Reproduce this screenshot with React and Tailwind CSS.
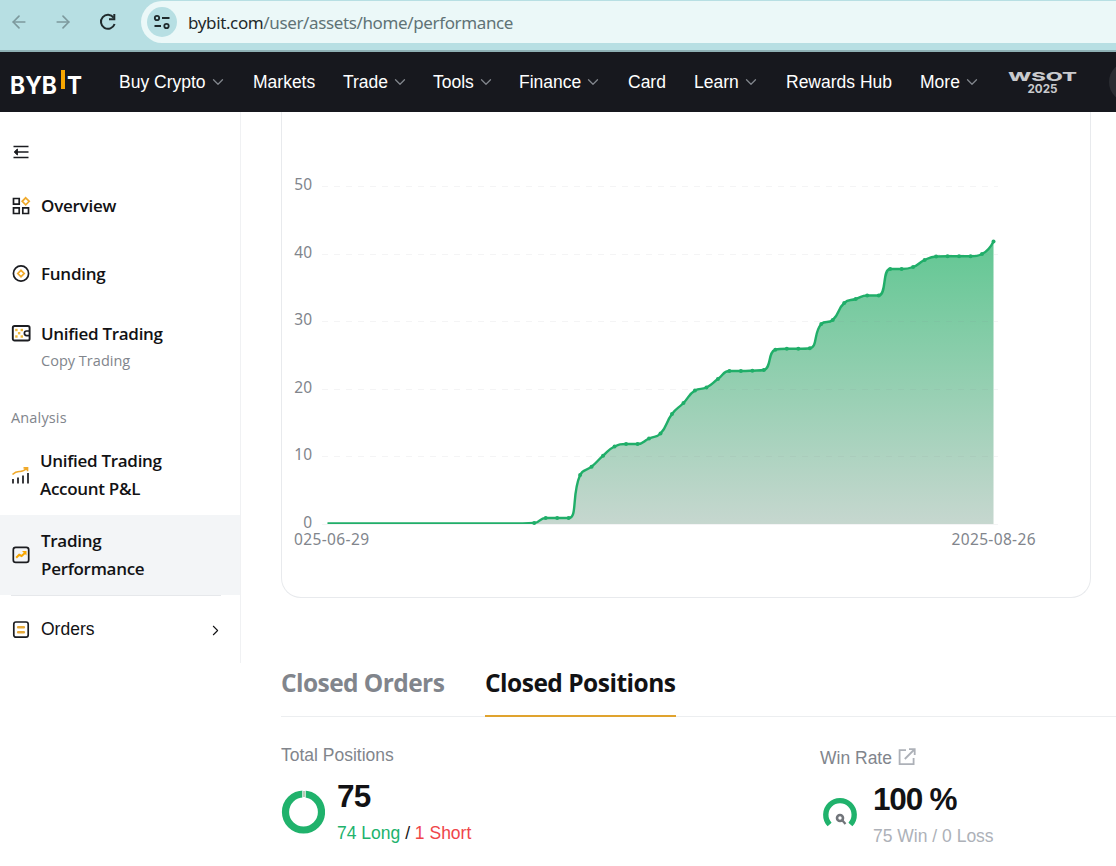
import clsx from 'clsx';
import { ArrowLeft, ArrowRight, ChevronDown, ChevronRight } from 'lucide-react';

const NAV = [
  { label: 'Buy Crypto', width: 'w-[134px]', menu: true },
  { label: 'Markets', width: 'w-[90px]' },
  { label: 'Trade', width: 'w-[90px]', menu: true },
  { label: 'Tools', width: 'w-[86px]', menu: true },
  { label: 'Finance', width: 'w-[109px]', menu: true },
  { label: 'Card', width: 'w-[66px]' },
  { label: 'Learn', width: 'w-[92px]', menu: true },
  { label: 'Rewards Hub', width: 'w-[134px]' },
  { label: 'More', width: 'w-[88px]', menu: true },
];

// chart y positions, one per day from 2025-06-29
const DAILY = [
  ...Array(18).fill(523.5),
  523, 518, 518, 518, 475, 466.7, 455.7, 446.5, 444, 444, 438.5, 433.5, 414, 403, 390.5, 387.5,
  379, 371, 371, 370.7, 370, 349.7, 348.7, 348.7, 348.2, 324, 320, 303, 299, 295.5, 295.5,
  269, 269, 267, 260, 256.5, 256.2, 256.2, 256.2, 254, 241.5,
];
const POINTS = DAILY.map((y, i) => [327.5 + i * 11.483 - 281, y - 112]);

const between = (v, a, b) => Math.min(Math.max(v, Math.min(a, b)), Math.max(a, b));

// bezier smoothing, control points are kept between neighbours so flat runs stay flat
function smoothPath(pts) {
  const smooth = 0.5;
  let d = `M${pts[0][0]} ${pts[0][1]}`;
  let cp0 = pts[0];
  for (let i = 1; i < pts.length; i++) {
    const prev = pts[i - 1];
    const cur = pts[i];
    const next = pts[i + 1];
    let cp1 = cur;
    let nextCp = cur;
    if (next) {
      const lenPrev = Math.hypot(cur[0] - prev[0], cur[1] - prev[1]);
      const lenNext = Math.hypot(next[0] - cur[0], next[1] - cur[1]);
      const ratio = lenNext / (lenNext + lenPrev);
      nextCp = cur.map((c, k) => between(c + (next[k] - prev[k]) * smooth * ratio, next[k], c));
      cp1 = cur.map((c, k) => between(c - ((nextCp[k] - c) * lenPrev) / lenNext, prev[k], c));
      nextCp = cur.map((c, k) => c + ((c - cp1[k]) * lenNext) / lenPrev);
    }
    d += `C${cp0[0]} ${cp0[1]} ${cp1[0]} ${cp1[1]} ${cur[0]} ${cur[1]}`;
    cp0 = nextCp;
  }
  return d;
}

const LINE = smoothPath(POINTS);

const BrowserBar = () => (
  <div className="flex h-[52px] border-b-2 border-[#8fb1b5] bg-[#b7dfe3]">
    <div className="flex h-11 w-[141px] items-center pl-[9px] text-[#7d999d]">
      <ArrowLeft size={20} strokeWidth={2} />
      <ArrowRight size={20} strokeWidth={2} className="ml-[24px]" />
      <svg width="20" height="20" viewBox="0 0 20 20" className="ml-[25px]" fill="none" stroke="#1f2a2c" strokeWidth="2">
        <path d="M15.6 5.6A7 7 0 1 0 16.6 12" />
        <path d="M16.3 2v5.2H11" />
      </svg>
    </div>
    <div className="mt-px flex h-[42px] flex-1 items-center rounded-l-full bg-[#ebf8f8] pl-[6px]">
      <div className="flex size-[30px] items-center justify-center rounded-full bg-[#b7dfe3]">
        <svg width="18" height="18" viewBox="0 0 18 18" fill="none" stroke="#1f2a2c" strokeWidth="1.8">
          <circle cx="4" cy="5" r="2.2" />
          <path d="M9 5h7.5M1.5 13H8" />
          <circle cx="13.5" cy="13" r="2.2" />
        </svg>
      </div>
      <p className="ml-[11px] pt-px font-['Noto_Sans'] text-[17px] tracking-[-0.37px] text-[#5f7376]">
        <span className="text-[#1f2a2c]">bybit.com</span>/user/assets/home/performance
      </p>
    </div>
  </div>
);

const Header = () => (
  <header className="flex h-[60px] items-center overflow-hidden bg-[#17181e] font-['Liberation_Sans'] text-[17.5px] text-white">
    <svg width="119" height="60" className="shrink-0 font-['Inter'] font-bold" fill="#fff">
      <text x="10" y="42" fontSize="24" textLength="47" lengthAdjust="spacingAndGlyphs">BYB</text>
      <rect x="61" y="18" width="4" height="19" fill="#f7a600" />
      <text x="67" y="42" fontSize="24" textLength="15" lengthAdjust="spacingAndGlyphs">T</text>
    </svg>
    {NAV.map(item => (
      <a key={item.label} className={clsx('flex shrink-0 items-center whitespace-nowrap', item.width)}>
        {item.label}
        {item.menu && <ChevronDown size={18} strokeWidth={1.7} className="ml-[3px] text-[#81858c]" />}
      </a>
    ))}
    <svg width="70" height="60" className="shrink-0 font-['Inter']" fill="#c9cacd">
      <text x="0" y="29" fontSize="12" fontWeight="800" textLength="69" lengthAdjust="spacingAndGlyphs">WSOT</text>
      <text x="19.5" y="40.5" fontSize="11.5" fontWeight="700" textLength="30" lengthAdjust="spacingAndGlyphs">2025</text>
    </svg>
    <div className="ml-[31px] size-10 shrink-0 rounded-full bg-[#2b2c32]" />
  </header>
);

const Icon = ({ children }) => (
  <svg width="20" height="20" viewBox="0 0 20 20" fill="none" stroke="#1b1c20" strokeWidth="1.7" className="shrink-0">
    {children}
  </svg>
);

const Sidebar = () => (
  <aside className="h-[551px] w-[241px] shrink-0 border-r border-[#f0f1f3] font-['Open_Sans'] text-[17px] leading-7 font-semibold text-[#121214]">
    <div className="flex h-20 items-center pl-[11px]">
      <Icon>
        <path d="M2.5 4.5h15M4 10h13.5M2.5 15.5h15" />
        <path d="M6.4 7 3.2 10l3.2 3z" fill="#1b1c20" strokeWidth="1" />
      </Icon>
    </div>
    <div className="flex h-7 items-center gap-[10px] pl-[11px]">
      <Icon>
        <path d="M2.5 2.5h5.7v5.7H2.5zM2.5 11.8h5.7v5.7H2.5zM11.8 11.8h5.7v5.7h-5.7z" />
        <path d="M14.7 1.8 18.2 5.3 14.7 8.8 11.2 5.3z" stroke="#f0a92a" />
      </Icon>
      <span className="tracking-[-0.25px]">Overview</span>
    </div>
    <div className="mt-10 flex h-7 items-center gap-[10px] pl-[11px]">
      <Icon>
        <circle cx="10" cy="9.5" r="7.6" />
        <path d="M10 6.3 13.2 9.5 10 12.7 6.8 9.5z" stroke="#f0a92a" />
      </Icon>
      <span className="tracking-[-0.25px]">Funding</span>
    </div>
    <div className="mt-8 flex h-7 items-center gap-[10px] pl-[11px]">
      <Icon>
        <rect x="1.8" y="2" width="16.8" height="14.5" rx="1.8" strokeWidth="1.9" />
        <path d="M18.5 7h-2.8a2.3 2.3 0 0 0 0 4.6h2.8" />
        <g fill="#f0b93a" stroke="none">
          <rect x="4.2" y="4.8" width="2.4" height="2.4" />
          <rect x="9.6" y="4.8" width="2.4" height="2.4" />
          <rect x="6.9" y="8" width="2.4" height="2.4" />
          <rect x="4.2" y="11.3" width="2.4" height="2.4" />
          <rect x="9.6" y="11.3" width="2.4" height="2.4" />
        </g>
      </Icon>
      <span className="tracking-[-0.3px]">Unified Trading</span>
    </div>
    <p className="h-[26px] pl-[41px] text-[14.5px] leading-[26px] font-medium tracking-[0.02px] text-[#81858c]">Copy Trading</p>
    <p className="mt-8 h-6 pl-[11px] text-[14.5px] leading-6 font-normal tracking-[0.15px] text-[#81858c]">Analysis</p>
    <div className="mt-[17px] flex h-14 items-center gap-[9px] pl-[11px]">
      <Icon>
        <path d="M2 14v4.5M7 12.5v6M12 10.5v8M17 8v10.5" />
        <path d="M1.5 9.5C5 6 7 6.5 9 6.5s4-.5 7-3.5M12.5 2.8h4v3.5" stroke="#f0a92a" />
      </Icon>
      <p className="w-40 tracking-[-0.3px]">Unified Trading Account P&amp;L</p>
    </div>
    <div className="mt-3 flex h-20 items-center gap-[10px] bg-[#f3f5f7] pl-[11px]">
      <Icon>
        <rect x="2.3" y="2.3" width="15.4" height="15" rx="2.4" />
        <path d="M5.2 12.8 8.2 9.8 10.6 11 14.5 7.5" stroke="#f7a600" strokeWidth="2" />
        <path d="M11 6h4.5v4.5z" fill="#f7a600" stroke="none" />
      </Icon>
      <p className="w-28 tracking-[-0.3px]">Trading Performance</p>
    </div>
    <div className="mr-[19px] ml-[11px] flex h-[67px] items-center border-t border-[#e6e8eb]">
      <Icon>
        <rect x="2.8" y="3" width="14.4" height="15.2" rx="2.2" />
        <path d="M7.2 8.2h5.6M7.2 13.2h5.6" stroke="#e6a93a" strokeWidth="2.6" strokeLinecap="round" />
      </Icon>
      <span className="ml-[10px] font-['Liberation_Sans'] text-[17.5px] font-normal">Orders</span>
      <ChevronRight size={17} strokeWidth={1.5} className="mt-[3px] mr-[-3px] ml-auto" />
    </div>
  </aside>
);

const Chart = () => (
  <div className="h-[486px] w-[810px] rounded-b-[20px] border border-t-0 border-[#e8eaed]">
    <svg width="808" height="480" viewBox="1 0 808 480" className="font-['Noto_Sans']">
      <defs>
        <linearGradient id="profit" x1="0" y1="0" x2="0" y2="1">
          <stop offset="0" stopColor="#62c793" />
          <stop offset="1" stopColor="#c6d7cf" />
        </linearGradient>
        <clipPath id="plot">
          <path d="M40 0H720V412H40Z" />
        </clipPath>
      </defs>
      <path d={`${LINE}V412H46.5Z`} fill="url(#profit)" />
      {[50, 40, 30, 20, 10, 0].map(v => {
        const y = 412 - v * 6.75;
        return (
          <g key={v}>
            <path d={`M41 ${Math.floor(y) + 0.5}H717`} stroke="#81858c" strokeOpacity="0.09" strokeDasharray={v ? '6 6' : undefined} />
            <text x="31" y={y + 3.5} textAnchor="end" fontSize="15.5" fill="#81858c">{v}</text>
          </g>
        );
      })}
      <path d={LINE} fill="none" stroke="#20ae69" strokeWidth="2.4" clipPath="url(#plot)" />
      {POINTS.slice(18).map(([x, y]) => <circle key={x} cx={x} cy={y} r="2" fill="#20ae69" />)}
      <text x="13" y="433" fontSize="15.5" textLength="75" fill="#81858c">025-06-29</text>
      <text x="670.5" y="433" fontSize="15.5" textLength="84" fill="#81858c">2025-08-26</text>
    </svg>
  </div>
);

const Stats = () => (
  <div className="flex font-['Liberation_Sans'] text-[17.5px] leading-6">
    <div className="w-[539px] pt-[26px]">
      <p className="text-[#81858c]">Total Positions</p>
      <div className="mt-[13px] flex">
        <svg width="44" height="44" className="mt-[10px] shrink-0" fill="none">
          <circle cx="22.5" cy="22" r="18" stroke="#20b26c" strokeWidth="7.2" />
          <path d="M23 0v8" stroke="#fff" strokeWidth="3.4" />
          <path d="M23 1v6" stroke="#aab9a4" strokeWidth="1.6" />
        </svg>
        <div className="ml-3">
          <p className="text-[31.5px] leading-8 font-bold tracking-[-0.8px] text-[#121214]">75</p>
          <p className="mt-[9px] text-[#121214]">
            <span className="text-[#20b26c]">74 Long</span> / <span className="text-[#ef454a]">1 Short</span>
          </p>
        </div>
      </div>
    </div>
    <div className="pt-[29px]">
      <p className="flex items-center text-[#81858c]">
        Win Rate
        <svg width="18" height="18" viewBox="0 0 18 18" className="mt-[-2px] ml-[6px]" fill="none" stroke="#adb1b8" strokeWidth="1.8">
          <path d="M8 2.2H1.6v14h14V10" />
          <path d="M6.8 11 16.3 1.5M11 1.2h5.7V7" />
        </svg>
      </p>
      <div className="mt-[13px] flex">
        <svg width="36" height="36" className="mt-[14px] ml-[2px] shrink-0" fill="none">
          <path d="M7.6 27.5A14.2 14.2 0 1 1 28.4 27.5" stroke="#20b26c" strokeWidth="5.4" />
          <circle cx="18" cy="21" r="3" stroke="#71757a" strokeWidth="2.6" />
          <path d="M20 23 23.5 27" stroke="#71757a" strokeWidth="2.2" />
        </svg>
        <div className="ml-[15px]">
          <p className="text-[31.5px] leading-8 font-bold tracking-[-1.2px] text-[#121214]">100 %</p>
          <p className="mt-[9px] text-[#adb1b8]">75 Win / 0 Loss</p>
        </div>
      </div>
    </div>
  </div>
);

const App = () => {
  return (
    <div className="h-[866px] w-[1116px] overflow-hidden bg-white">
      <BrowserBar />
      <Header />
      <div className="flex">
        <Sidebar />
        <main className="ml-10 flex-1">
          <Chart />
          <div className="mt-[62px] flex h-[57px] gap-[41px] border-b border-[#eceef0] font-['Open_Sans'] text-[24.5px] leading-[46px] font-bold">
            <button className="h-[57px] w-[163px] pb-[11px] text-left tracking-[-0.57px] whitespace-nowrap text-[#81858c]">Closed Orders</button>
            <button className="h-[57px] w-[191px] border-b-2 border-[#e0a32e] pb-[9px] text-left tracking-[-0.51px] whitespace-nowrap text-[#121214]">Closed Positions</button>
          </div>
          <Stats />
        </main>
      </div>
    </div>
  );
};

export default App;
